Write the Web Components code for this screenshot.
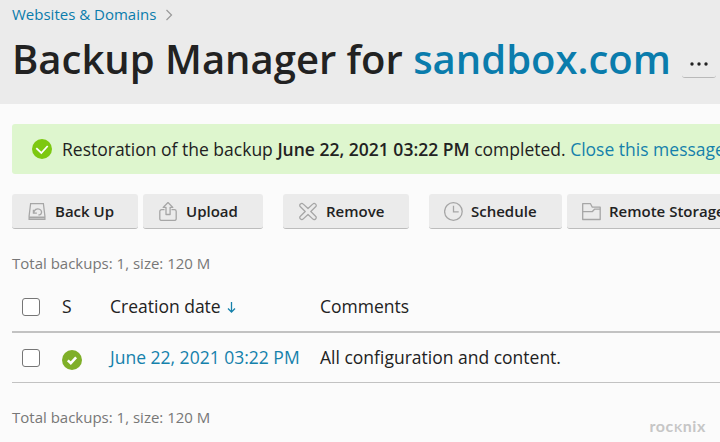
<!DOCTYPE html>
<html lang="en">
<head>
<meta charset="utf-8">
<title>Backup Manager</title>
<style>
body {
	margin: 0;
	height: 442px;
	overflow: hidden;
	background: #fbfbfb;
	color: #222;
	font: 17.5px/25px "Open Sans", "Noto Sans", sans-serif;
}
</style>
</head>
<body>
<backup-page></backup-page>

<script>
(() => {
	const icons = {
		backup: `<g fill="none" stroke="#a6a6a6" stroke-width="1.25"><path d="M2.6 1.6h12.8l1.5 12.5v3.3H1.1v-3.3z"/><path d="M1 15.3h16M1 17.2h16" stroke-width="1.5"/><path d="M5.4 7.7v3.4h3.5M5.7 10.8c.5-3.1 3.2-4.8 5.8-3.6 3.1 1.4 2.7 5.6-1.2 5.8"/></g>`,
		upload: `<g fill="none" stroke="#a6a6a6" stroke-width="1.3" stroke-linejoin="round"><path d="M5.5 7.7H2.6A1.8 1.8 0 0 0 .8 9.5v7.2a1.8 1.8 0 0 0 1.8 1.8h12.8a1.8 1.8 0 0 0 1.8-1.8V9.5a1.8 1.8 0 0 0-1.8-1.8h-2.9"/><path d="M9 .5l4.8 4.9h-2.7v7.1H7V5.4H4.2z"/></g>`,
		remove: `<path fill="none" stroke="#a6a6a6" stroke-width="1.3" stroke-linejoin="round" d="M1.4 2.1c.9-.9 2-.9 2.9 0L9 6.5l4.7-4.4c.9-.9 2-.9 2.9 0s.9 1.9 0 2.7L11.8 9.5l4.8 4.7c.9.8.9 1.9 0 2.7s-2 .9-2.9 0L9 12.5l-4.7 4.4c-.9.9-2 .9-2.9 0s-.9-1.9 0-2.7l4.8-4.7-4.8-4.7c-.9-.8-.9-1.9 0-2.7z"/>`,
		schedule: `<g fill="none" stroke="#a6a6a6" stroke-width="1.3"><circle cx="9.4" cy="9.5" r="8.8"/><path d="M9.5 3.8v6h5.2"/></g>`,
		storage: `<g fill="none" stroke="#a6a6a6" stroke-width="1.3" stroke-linejoin="round"><path d="M.7 17.5V1.7h7.8l1.8 3.5h7.9v12.3z"/><path d="M.7 9.7h9.5l2.3-2.5h5.7"/></g>`,
	};

	const define = (name, html, setup) => {
		const template = document.createElement("template");
		template.innerHTML = html;
		customElements.define(
			name,
			class extends HTMLElement {
				constructor() {
					super();
					const root = this.attachShadow({ mode: "open" });
					root.append(template.content.cloneNode(true));
				}

				connectedCallback() {
					if (setup) {
						setup(this, this.shadowRoot);
					}
				}
			},
		);
	};

	define("page-header", `
<style>
:host {
	display: block;
	box-sizing: border-box;
	height: 104px;
	padding: 3px 0 0 12px;
	background: #ebebeb;
}
a { color: #0a7cac; text-decoration: none; }
nav {
	display: flex;
	align-items: center;
	height: 23px;
	font-size: 15px;
	line-height: 23px;
}
nav svg { margin-left: 9px; }
.title {
	display: flex;
	align-items: center;
	height: 66px;
	white-space: nowrap;
}
h1 {
	margin: 0;
	font-size: 40px;
	line-height: 54px;
	font-weight: 600;
}
button {
	display: flex;
	align-items: center;
	justify-content: center;
	width: 34px;
	height: 28px;
	margin: 10px 0 0 11px;
	padding: 0;
	border: 0;
	border-bottom: 1px solid #b9b9b9;
	border-radius: 3px;
	background: #ebebeb;
}
</style>
<nav>
	<a>Websites &amp; Domains</a>
	<svg width="8" height="12" viewBox="0 0 8 12"><path d="M1.5 1l5 5-5 5" fill="none" stroke="#999" stroke-width="1.2"/></svg>
</nav>
<div class="title">
	<h1>Backup Manager for <a>sandbox.com</a></h1>
	<button aria-label="More"><svg width="18" height="4" viewBox="0 0 18 4" fill="#222"><circle cx="2" cy="2" r="1.7"/><circle cx="9" cy="2" r="1.7"/><circle cx="16" cy="2" r="1.7"/></svg></button>
</div>
`);

	define("status-icon", `
<style>
:host { display: block; width: 20px; height: 20px; flex: none; color: #7dc811; }
svg { display: block; }
</style>
<svg width="20" height="20" viewBox="0 0 20 20"><circle cx="10" cy="10" r="10" fill="currentColor"/><path fill="none" stroke="#fff"/></svg>
`, (el, root) => {
		const solid = el.hasAttribute("solid");
		const path = root.querySelector("path");
		path.setAttribute("d", solid ? "M5.8 10.3l3 2.9 5.3-5.8" : "M4.3 9.2l5 4.8 6.4-7");
		path.setAttribute("stroke-width", solid ? "2.5" : "1.8");
	});

	define("status-message", `
<style>
:host {
	display: flex;
	align-items: center;
	box-sizing: border-box;
	height: 50px;
	padding-left: 20px;
	border-radius: 3px 0 0 3px;
	background: #def6ce;
	white-space: nowrap;
}
p { margin: 0 0 0 10px; }
</style>
<status-icon></status-icon>
<p><slot></slot></p>
`);

	define("tool-button", `
<style>
:host {
	display: flex;
	align-items: center;
	box-sizing: border-box;
	flex: none;
	width: var(--width);
	height: 35px;
	padding-left: 16px;
	border-bottom: 1px solid #bcbcbc;
	border-radius: 3px;
	background: #ebebeb;
	font-size: 15px;
	font-weight: 600;
	white-space: nowrap;
}
:host([icon="storage"]), :host([icon="schedule"]) { padding-left: 15px; }
svg { flex: none; margin-right: 8px; }
</style>
<svg width="19" height="19" viewBox="0 0 19 19"></svg>
<slot></slot>
`, (el, root) => {
		root.querySelector("svg").innerHTML = icons[el.getAttribute("icon")];
		el.style.setProperty("--width", el.getAttribute("width") + "px");
	});

	define("check-box", `
<style>
:host {
	display: block;
	box-sizing: border-box;
	width: 18px;
	height: 18px;
	border: 1px solid #767676;
	border-radius: 3px;
	background: #fff;
}
</style>
`);

	define("backup-row", `
<style>
:host {
	display: grid;
	grid-template-columns: 40px 48px 210px 1fr;
	align-items: center;
	box-sizing: border-box;
	height: 50px;
	padding-left: 10px;
	border-bottom: 1px solid #c2c2c2;
	white-space: nowrap;
}
:host([head]) { border-bottom-width: 2px; height: 51px; }
</style>
<check-box></check-box>
<slot></slot>
`);

	define("backup-page", `
<style>
:host { display: block; height: 442px; overflow: hidden; }
main { margin-left: 12px; padding-top: 20px; }
a { color: #1581ab; }
b { font-weight: 600; }
.toolbar { display: flex; gap: 5px; margin-top: 20px; }
.split { margin-left: 15px; }
.total {
	font-size: 15px;
	line-height: 22px;
	color: #777;
}
.top { margin-top: 23px; }
.table { margin-top: 8px; }
.sort { margin-left: 2px; }
.done { color: #7faf28; margin-top: 4px; }
footer { display: flex; align-items: flex-start; margin-top: 23px; }
.mark {
	margin: 10px 14px 0 auto;
	color: #c6c6c6;
	font: 700 16px/20px Lato, sans-serif;
	letter-spacing: 0.6px;
}
.mark span { font-size: 17.5px; font-variant: small-caps; }
</style>
<page-header></page-header>
<main>
	<status-message>Restoration of the backup <b>June 22, 2021 03:22 PM</b> completed. <a>Close this message.</a></status-message>
	<div class="toolbar">
		<tool-button icon="backup" width="126">Back Up</tool-button>
		<tool-button icon="upload" width="120">Upload</tool-button>
		<tool-button icon="remove" width="126" class="split">Remove</tool-button>
		<tool-button icon="schedule" width="133" class="split">Schedule</tool-button>
		<tool-button icon="storage" width="190">Remote Storage</tool-button>
	</div>
	<div class="total top">Total backups: 1, size: 120 M</div>
	<div class="table">
		<backup-row head>
			<span>S</span>
			<span>Creation date <svg class="sort" width="9" height="12" viewBox="0 0 9 12"><path d="M4.5 1v10M1 7.5L4.5 11 8 7.5" fill="none" stroke="#1581ab" stroke-width="1.3"/></svg></span>
			<span>Comments</span>
		</backup-row>
		<backup-row>
			<status-icon solid class="done"></status-icon>
			<a>June 22, 2021 03:22 PM</a>
			<span>All configuration and content.</span>
		</backup-row>
	</div>
	<footer>
		<div class="total">Total backups: 1, size: 120 M</div>
		<div class="mark">roc<span>k</span>nix</div>
	</footer>
</main>
`);
})();
</script>
</body>
</html>
